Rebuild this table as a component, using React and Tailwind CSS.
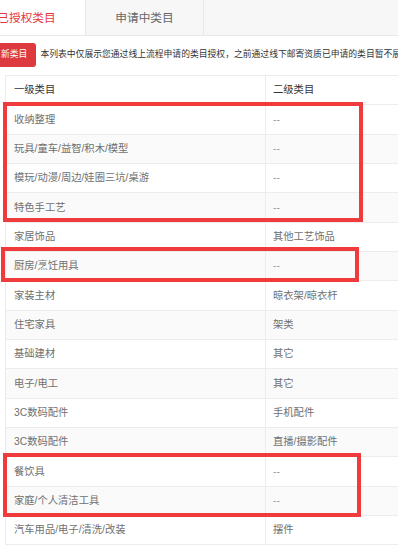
import React from 'react';

const rows = [
  ['收纳整理', '--'],
  ['玩具/童车/益智/积木/模型', '--'],
  ['模玩/动漫/周边/娃圈三坑/桌游', '--'],
  ['特色手工艺', '--'],
  ['家居饰品', '其他工艺饰品'],
  ['厨房/烹饪用具', '--'],
  ['家装主材', '晾衣架/晾衣杆'],
  ['住宅家具', '架类'],
  ['基础建材', '其它'],
  ['电子/电工', '其它'],
  ['3C数码配件', '手机配件'],
  ['3C数码配件', '直播/摄影配件'],
  ['餐饮具', '--'],
  ['家庭/个人清洁工具', '--'],
  ['汽车用品/电子/清洗/改装', '摆件'],
];

export default function App() {
  return (
    <div className="relative w-[398px] h-[550px] overflow-hidden bg-white font-['Liberation_Sans','Noto_Sans_CJK_SC',sans-serif]">
      {/* tabs */}
      <div className="flex h-[36px] bg-[#f7f7f7] border-b border-[#e8e8e8]">
        <div className="-ml-[32px] w-[118px] shrink-0 bg-white border-r border-[#e8e8e8] flex items-center justify-center text-[11.7px] text-[#e4393c]">
          已授权类目
        </div>
        <div className="w-[118px] shrink-0 border-r border-[#e8e8e8] flex items-center justify-center text-[11.7px] text-[#666]">
          申请中类目
        </div>
      </div>

      {/* notice */}
      <div className="mt-[7px] h-[24px] flex items-center">
        <button type="button" className="-ml-[8px] h-[24px] shrink-0 px-[9px] bg-[#dc3a3f] text-white text-[8.8px] rounded-[3px]">
          新类目
        </button>
        <p className="ml-[4px] whitespace-nowrap text-[8.8px] text-[#333]">
          本列表中仅展示您通过线上流程申请的类目授权，之前通过线下邮寄资质已申请的类目暂不展示
        </p>
      </div>

      {/* table */}
      <div className="mt-[8px] ml-[5px] w-[420px] border-l border-t border-[#ececec] text-[10.3px]">
        <div className="flex h-[29.33px] border-b border-[#ececec] bg-white text-[#333]">
          <div className="w-[260px] shrink-0 border-r border-[#ececec] flex items-center pl-[8px]">一级类目</div>
          <div className="flex-1 flex items-center pl-[7px]">二级类目</div>
        </div>
        {rows.map(([a, b], i) => (
          <div
            key={i}
            className={`flex h-[29.33px] border-b border-[#ececec] text-[#707070] ${i % 2 === 1 ? 'bg-[#fafafa]' : 'bg-white'}`}
          >
            <div className="w-[260px] shrink-0 border-r border-[#ececec] flex items-center pl-[8px]">{a}</div>
            <div className={`flex-1 flex items-center pl-[7px] ${b === '--' ? 'text-[#999]' : ''}`}>{b}</div>
          </div>
        ))}
      </div>

      {/* annotation boxes */}
      <div className="absolute left-[3px] top-[102px] w-[360px] h-[120px] border-[4px] border-[#ef3b3b]" />
      <div className="absolute left-[1px] top-[247px] w-[358px] h-[35px] border-[4px] border-[#ef3b3b]" />
      <div className="absolute left-[3px] top-[453px] w-[358px] h-[64px] border-[4px] border-[#ef3b3b]" />
    </div>
  );
}
